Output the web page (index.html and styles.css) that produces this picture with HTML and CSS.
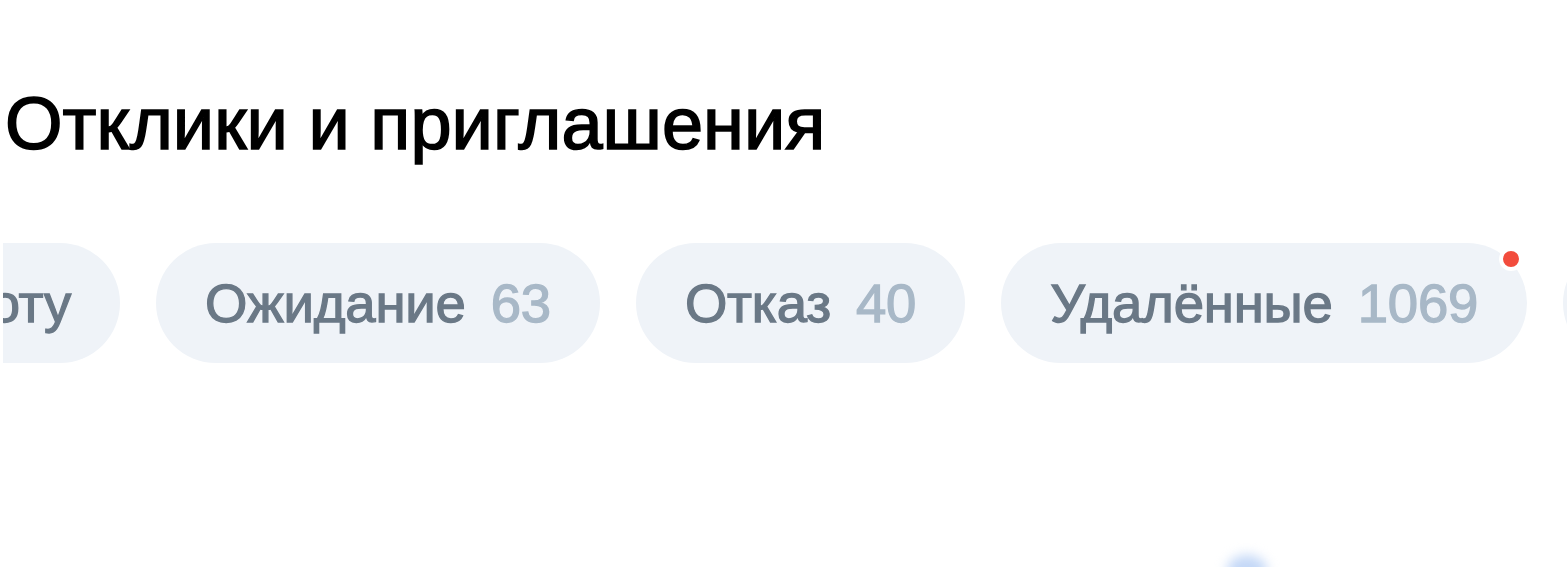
FILE: index.html
```html
<!DOCTYPE html>
<html lang="ru">
  <head>
    <meta charset="utf-8">
    <title>Отклики и приглашения</title>
    <link rel="stylesheet" href="styles.css">
  </head>
  <body>
    <div class="page">
      <h1 class="title">Отклики и приглашения</h1>

      <div class="tabs">
        <div class="tab-cut">
          <div class="tab">
            <span class="tab-label">Выход на работу</span>
          </div>
        </div>
        <div class="tab">
          <span class="tab-label">Ожидание</span>
          <span class="tab-count">63</span>
        </div>
        <div class="tab">
          <span class="tab-label">Отказ</span>
          <span class="tab-count">40</span>
        </div>
        <div class="tab">
          <span class="tab-label">Удалённые</span>
          <span class="tab-count">1069</span>
          <span class="tab-dot"></span>
        </div>
        <div class="tab">
          <span class="tab-label">Архив</span>
          <span class="tab-count">12</span>
        </div>
      </div>

      <div class="below">
        <div class="blob"></div>
      </div>
    </div>
  </body>
</html>
```

FILE: styles.css
```css
* {
  box-sizing: border-box;
}

html, body {
  margin: 0;
  height: 100%;
  overflow: hidden;
  background: #fff;
}

body {
  font-family: "Liberation Sans", Arial, sans-serif;
  color: #000;
}

.page {
  padding-top: 82px;
}

.title {
  margin: 0 0 0 5px;
  font-size: 74px;
  line-height: 83px;
  font-weight: 400;
  -webkit-text-stroke: 1.6px #000;
}

.tabs {
  display: flex;
  gap: 36px;
  margin-top: 78px;
  margin-left: 3px;
  overflow: hidden;
}

.tab-cut {
  display: flex;
  justify-content: flex-end;
  flex-shrink: 0;
  width: 117px;
  overflow: hidden;
}

.tab {
  position: relative;
  display: flex;
  align-items: center;
  flex-shrink: 0;
  height: 120px;
  padding: 0 49px;
  border-radius: 60px;
  background: #eff3f8;
  font-size: 54.5px;
  font-weight: 400;
  letter-spacing: -0.2px;
  white-space: nowrap;
}

.tab-label {
  color: #6a7886;
  -webkit-text-stroke: 1.3px #6a7886;
}

.tab-count {
  margin-left: 25px;
  color: #a8b8c7;
  -webkit-text-stroke: 1.3px #a8b8c7;
}

.tab-dot {
  position: absolute;
  top: 4px;
  right: 4px;
  width: 24px;
  height: 24px;
  border: 4px solid #fff;
  border-radius: 50%;
  background: #f24c3d;
}

.below {
  display: flex;
  justify-content: flex-end;
  padding: 192px 300px 0 0;
}

.blob {
  width: 40px;
  height: 30px;
  border-radius: 50%;
  background: #c4d8f7;
  filter: blur(6px);
}
```
